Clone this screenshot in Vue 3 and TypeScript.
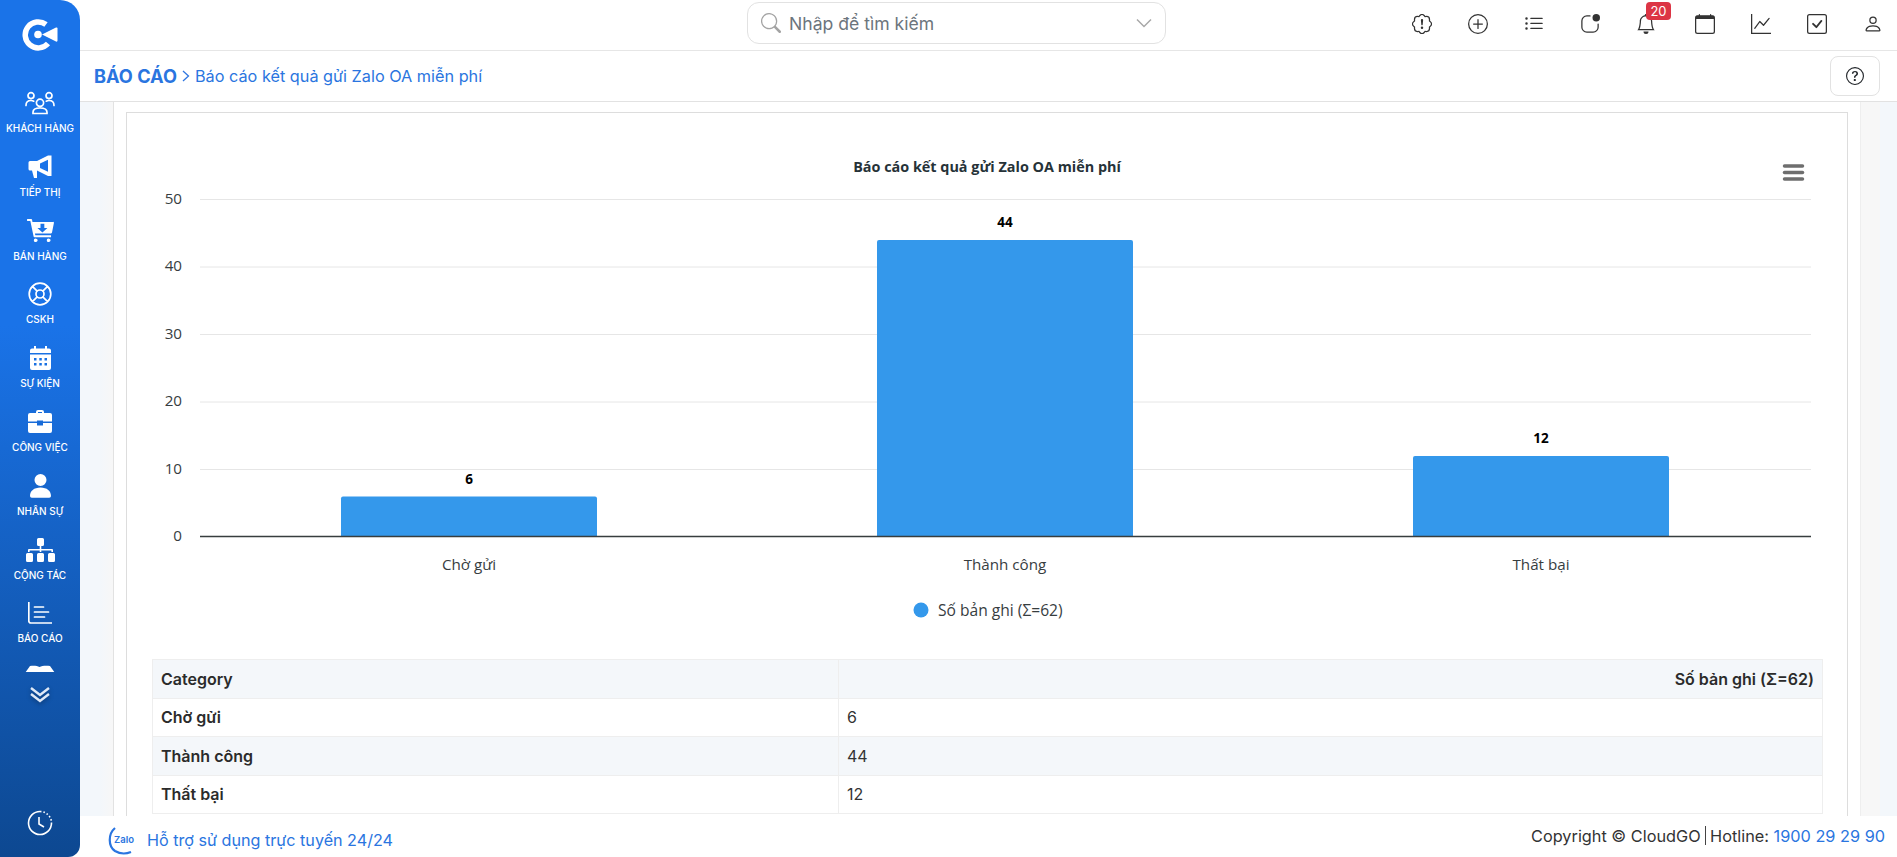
<script setup lang="ts">
interface NavItem {
  label: string;
  box: string;
  w: number;
  h: number;
  fill?: string;
  stroke?: string;
}

const navItems: NavItem[] = [
  {
    label: 'KHÁCH HÀNG',
    box: '0 0 30 24',
    w: 30,
    h: 24,
    stroke:
      'M15 8.2a3.6 3.6 0 1 0 0 7.2a3.6 3.6 0 0 0 0-7.2zM6 1.6a3 3 0 1 0 0 6a3 3 0 0 0 0-6zM24 1.6a3 3 0 1 0 0 6a3 3 0 0 0 0-6zM1 14.5c0-3.4 2-5 5-5c1.2 0 2 .2 2.7.7M29 14.5c0-3.4-2-5-5-5c-1.2 0-2 .2-2.7.7M8 22.5v-1.3c0-2.4 2.4-4.2 7-4.2s7 1.800 7 4.200v1.300z',
  },
  {
    label: 'TIẾP THỊ',
    box: '0 0 24 24',
    w: 24,
    h: 24,
    fill: 'M2 6H9L20 .5H23.500V21H20L9 15.500V23H6L4 15.500H2A1.500 1.500 0 0 1 .5 14V7.500A1.500 1.500 0 0 1 2 6zM12 8.500V13L20 16.800V4.700z',
  },
  {
    label: 'BÁN HÀNG',
    box: '0 0 28 24',
    w: 27,
    h: 23,
    fill: 'M0 0h4.200a1 1 0 0 1 1 .8L5.600 3H27a1 1 0 0 1 1 1.200l-2 10a1 1 0 0 1-1 .8H8.200l.4 2H25v2H7.800a1 1 0 0 1-1-.8L3.400 2H0zM14 5v4.500h-3.200L16 14l5.200-4.500H18V5zM9.500 20.500a2 1.800 0 1 0 0 3.500a2 1.800 0 0 0 0-3.500zM23 20.500a2 1.800 0 1 0 0 3.500a2 1.800 0 0 0 0-3.500z',
  },
  {
    label: 'CSKH',
    box: '0 0 24 24',
    w: 24,
    h: 24,
    stroke:
      'M12 1.200a10.800 10.800 0 1 0 0 21.600a10.800 10.800 0 0 0 0-21.600zM12 8a4 4 0 1 0 0 8a4 4 0 0 0 0-8zM4.400 4.400L9.200 9.200M19.600 4.400L14.800 9.200M4.400 19.600L9.200 14.800M19.600 19.600L14.800 14.800',
  },
  {
    label: 'SỰ KIỆN',
    box: '0 0 21 24',
    w: 21,
    h: 24,
    fill: 'M4 0h2v2.500h9V0h2v2.500h2a2 2 0 0 1 2 2V7H0V4.500a2 2 0 0 1 2-2h2zM0 8.500h21V22a2 2 0 0 1-2 2H2a2 2 0 0 1-2-2zM4 12v2.500h2.500V12zM9.300 12v2.500h2.500V12zM14.500 12v2.500H17V12zM4 17v2.500h2.500V17zM9.300 17v2.500h2.500V17zM14.500 17v2.500H17V17z',
  },
  {
    label: 'CÔNG VIỆC',
    box: '0 0 24 23',
    w: 24,
    h: 23,
    fill: 'M8 3V2a2 2 0 0 1 2-2h4a2 2 0 0 1 2 2v1h6a2 2 0 0 1 2 2v6.500H15v-1H9v1H0V5a2 2 0 0 1 2-2zm2-1v1h4V2zM0 13h9v2.500h6V13h9v8a2 2 0 0 1-2 2H2a2 2 0 0 1-2-2z',
  },
  {
    label: 'NHÂN SỰ',
    box: '0 0 21 24',
    w: 21,
    h: 24,
    fill: 'M10.500 0a6 6 0 1 1 0 12a6 6 0 0 1 0-12zM0 22c0-5 4-8.500 10.500-8.500S21 17 21 22a1.800 1.800 0 0 1-1.800 1.800H1.800A1.800 1.800 0 0 1 0 22z',
  },
  {
    label: 'CỘNG TÁC',
    box: '0 0 29 24',
    w: 29,
    h: 24,
    fill: 'M11 1.500A1.500 1.500 0 0 1 12.500 0h4A1.500 1.500 0 0 1 18 1.500v5A1.500 1.500 0 0 1 16.500 8h-1.200v3H26a1 1 0 0 1 1 1v2h-1.600v-1.400H15.300V14h-1.600v-1.400H3.600V14H2v-2a1 1 0 0 1 1-1h10.700V8h-1.200A1.500 1.500 0 0 1 11 6.500zM0 16.500A1.500 1.500 0 0 1 1.500 15h4A1.500 1.500 0 0 1 7 16.500v6A1.500 1.500 0 0 1 5.500 24h-4A1.500 1.500 0 0 1 0 22.500zM11 16.500A1.500 1.500 0 0 1 12.500 15h4A1.500 1.500 0 0 1 18 16.500v6a1.500 1.500 0 0 1-1.500 1.500h-4a1.500 1.500 0 0 1-1.500-1.500zM22 16.500A1.500 1.500 0 0 1 23.500 15h4A1.500 1.500 0 0 1 29 16.500v6a1.500 1.500 0 0 1-1.500 1.500h-4a1.500 1.500 0 0 1-1.500-1.500z',
  },
  {
    label: 'BÁO CÁO',
    box: '0 0 24 22',
    w: 24,
    h: 22,
    stroke: 'M.8 0v19a2 2 0 0 0 2 2H23.500M6.500 5h9M6.500 10h14M6.500 15h10',
  },
  {
    label: '',
    box: '0 0 30 24',
    w: 30,
    h: 24,
    fill: 'M5 1C8 .5 12 .5 14.500 2C17 .5 22 .5 25 1L30 8H0Z',
  },
];

interface TopIcon {
  name: string;
  paths: string[];
}

const circle = 'M8 15A7 7 0 1 1 8 1a7 7 0 0 1 0 14zm0 1A8 8 0 1 0 8 0a8 8 0 0 0 0 16z';

const topIcons: TopIcon[] = [
  {
    name: 'alert',
    paths: [
      'M7.001 11a1 1 0 1 1 2 0 1 1 0 0 1-2 0zM7.100 4.995a.905.905 0 1 1 1.800 0l-.35 3.507a.553.553 0 0 1-1.100 0L7.100 4.995z',
      'm10.273 2.513-.921-.944.715-.698.622.637.89-.011a2.890 2.890 0 0 1 2.924 2.924l-.01.89.636.622a2.890 2.890 0 0 1 0 4.134l-.637.622.011.89a2.890 2.890 0 0 1-2.924 2.924l-.89-.01-.622.636a2.890 2.890 0 0 1-4.134 0l-.622-.637-.89.011a2.890 2.890 0 0 1-2.924-2.924l.01-.89-.636-.622a2.890 2.890 0 0 1 0-4.134l.637-.622-.011-.89a2.890 2.890 0 0 1 2.924-2.924l.89.01.622-.636a2.890 2.890 0 0 1 4.134 0l-.715.698a1.890 1.890 0 0 0-2.704 0l-.92.944-1.320-.016a1.890 1.890 0 0 0-1.911 1.912l.016 1.318-.944.921a1.890 1.890 0 0 0 0 2.704l.944.92-.016 1.320a1.890 1.890 0 0 0 1.912 1.911l1.318-.016.921.944a1.890 1.890 0 0 0 2.704 0l.92-.944 1.320.016a1.890 1.890 0 0 0 1.911-1.912l-.016-1.318.944-.921a1.890 1.890 0 0 0 0-2.704l-.944-.92.016-1.320a1.890 1.890 0 0 0-1.912-1.911l-1.318.016z',
    ],
  },
  {
    name: 'plus',
    paths: [
      circle,
      'M8 4a.5.5 0 0 1 .5.5v3h3a.5.5 0 0 1 0 1h-3v3a.5.5 0 0 1-1 0v-3h-3a.5.5 0 0 1 0-1h3v-3A.5.5 0 0 1 8 4z',
    ],
  },
  {
    name: 'list',
    paths: [
      'M5 11.500a.5.5 0 0 1 .5-.5h9a.5.5 0 0 1 0 1h-9a.5.5 0 0 1-.5-.5zm0-4a.5.5 0 0 1 .5-.5h9a.5.5 0 0 1 0 1h-9a.5.5 0 0 1-.5-.5zm0-4a.5.5 0 0 1 .5-.5h9a.5.5 0 0 1 0 1h-9a.5.5 0 0 1-.5-.5zm-3 1a1 1 0 1 0 0-2 1 1 0 0 0 0 2zm0 4a1 1 0 1 0 0-2 1 1 0 0 0 0 2zm0 4a1 1 0 1 0 0-2 1 1 0 0 0 0 2z',
    ],
  },
  {
    name: 'app',
    paths: [
      'M5.500 2A3.500 3.500 0 0 0 2 5.500v5A3.500 3.500 0 0 0 5.500 14h5a3.500 3.500 0 0 0 3.500-3.500V8a.5.5 0 0 1 1 0v2.500a4.500 4.500 0 0 1-4.500 4.500h-5A4.500 4.500 0 0 1 1 10.500v-5A4.500 4.500 0 0 1 5.500 1H8a.5.5 0 0 1 0 1H5.500z',
      'M16 3a3 3 0 1 1-6 0 3 3 0 0 1 6 0z',
    ],
  },
  {
    name: 'bell',
    paths: [
      'M8 16a2 2 0 0 0 2-2H6a2 2 0 0 0 2 2zM8 1.918l-.797.161A4.002 4.002 0 0 0 4 6c0 .628-.134 2.197-.459 3.742-.16.767-.376 1.566-.663 2.258h10.244c-.287-.692-.502-1.490-.663-2.258C12.134 8.197 12 6.628 12 6a4.002 4.002 0 0 0-3.203-3.920L8 1.917zM14.220 12c.223.447.481.801.78 1H1c.299-.199.557-.553.78-1C2.680 10.200 3 6.880 3 6c0-2.420 1.720-4.440 4.005-4.901a1 1 0 1 1 1.990 0A5.002 5.002 0 0 1 13 6c0 .88.32 4.200 1.220 6z',
    ],
  },
  {
    name: 'calendar',
    paths: [
      'M3.500 0a.5.5 0 0 1 .5.5V1h8V.5a.5.5 0 0 1 1 0V1h1a2 2 0 0 1 2 2v11a2 2 0 0 1-2 2H2a2 2 0 0 1-2-2V3a2 2 0 0 1 2-2h1V.5a.5.5 0 0 1 .5-.5zM1 4v10a1 1 0 0 0 1 1h12a1 1 0 0 0 1-1V4z',
    ],
  },
  {
    name: 'graph',
    paths: [
      'M0 0h1v15h15v1H0V0Zm14.817 3.113a.5.5 0 0 1 .07.704l-4.500 5.500a.5.5 0 0 1-.74.037L7.060 6.767l-3.656 5.027a.5.5 0 0 1-.808-.588l4-5.500a.5.5 0 0 1 .758-.06l2.609 2.610 4.150-5.073a.5.5 0 0 1 .704-.07Z',
    ],
  },
  {
    name: 'check',
    paths: [
      'M14 1a1 1 0 0 1 1 1v12a1 1 0 0 1-1 1H2a1 1 0 0 1-1-1V2a1 1 0 0 1 1-1h12zM2 0a2 2 0 0 0-2 2v12a2 2 0 0 0 2 2h12a2 2 0 0 0 2-2V2a2 2 0 0 0-2-2H2z',
      'M10.970 4.970a.75.75 0 0 1 1.071 1.050l-3.992 4.990a.75.75 0 0 1-1.080.02L4.324 8.384a.75.75 0 1 1 1.060-1.060l2.094 2.093 3.473-4.425a.235.235 0 0 1 .02-.022z',
    ],
  },
  {
    name: 'person',
    paths: [
      'M8 8a3 3 0 1 0 0-6 3 3 0 0 0 0 6zm2-3a2 2 0 1 1-4 0 2 2 0 0 1 4 0zm4 8c0 1-1 1-1 1H3s-1 0-1-1 1-4 6-4 6 3 6 4zm-1-.004c-.001-.246-.154-.986-.832-1.664C11.516 10.680 10.289 10 8 10c-2.290 0-3.516.68-4.168 1.332-.678.678-.83 1.418-.832 1.664h10z',
    ],
  },
];

// chart geometry, in the svg's own pixels
const baseY = 424;
const perUnit = 6.75;
const plotLeft = 73;
const plotRight = 1684;
const ticks = [50, 40, 30, 20, 10, 0];
const bars = [
  { name: 'Chờ gửi', value: 6, center: 342 },
  { name: 'Thành công', value: 44, center: 878 },
  { name: 'Thất bại', value: 12, center: 1414 },
];
const barWidth = 256;

const rows = [
  { name: 'Chờ gửi', value: 6 },
  { name: 'Thành công', value: 44 },
  { name: 'Thất bại', value: 12 },
];

function barPath(center: number, value: number): string {
  const left = center - barWidth / 2;
  const top = baseY - value * perUnit;
  return `M${left} ${baseY}V${top + 2}q0-2 2-2H${left + barWidth - 2}q2 0 2 2V${baseY}Z`;
}
</script>

<template>
  <div class="page">
    <aside class="sidebar">
      <svg class="logo" width="36" height="33" viewBox="0 0 36 33">
        <path d="M24 6.500A13 13 0 1 0 26 25.500" fill="none" stroke="#fff" stroke-width="5.500" />
        <circle cx="16" cy="16.500" r="3.800" fill="#fff" />
        <path d="M20 16.500L34 9.500Q35.500 9 35.500 10.500V22.500Q35.500 24 34 23.500Z" fill="#fff" />
      </svg>
      <nav class="nav-list">
        <div v-for="(item, i) in navItems" :key="i" class="nav-item">
          <div class="nav-icon">
            <svg :width="item.w" :height="item.h" :viewBox="item.box">
              <path v-if="item.fill" :d="item.fill" fill="#fff" fill-rule="evenodd" />
              <path v-if="item.stroke" :d="item.stroke" fill="none" stroke="#fff" stroke-width="1.700" stroke-linecap="round" />
            </svg>
          </div>
          <div v-if="item.label" class="nav-label">{{ item.label }}</div>
        </div>
      </nav>
      <svg class="more" width="22" height="17" viewBox="0 0 22 17">
        <path d="M2 2l9 7 9-7M2 8l9 7 9-7" fill="none" stroke="#dfe9f7" stroke-width="2.400" />
      </svg>
      <svg class="clock" width="26" height="26" viewBox="0 0 26 26">
        <path d="M13 1.500A11.500 11.500 0 1 0 24.500 13" fill="none" stroke="#fff" stroke-width="1.600" />
        <path d="M13 1.500A11.500 11.500 0 0 1 24.500 13" fill="none" stroke="#fff" stroke-width="1.600" stroke-dasharray="1.500 2" />
        <path d="M12 7v7l5 3" fill="none" stroke="#fff" stroke-width="1.600" />
      </svg>
    </aside>

    <div class="main">
      <header class="topbar">
        <div class="search">
          <svg width="20" height="20" viewBox="0 0 16 16" fill="#a3a3a3">
            <path d="M11.742 10.344a6.500 6.500 0 1 0-1.397 1.398h-.001c.03.04.062.078.098.115l3.850 3.850a1 1 0 0 0 1.415-1.414l-3.850-3.850a1 1 0 0 0-.115-.1zM12 6.500a5.500 5.500 0 1 1-11 0 5.500 5.500 0 0 1 11 0z" />
          </svg>
          <span class="search-text">Nhập để tìm kiếm</span>
          <svg class="search-arrow" width="16" height="10" viewBox="0 0 16 10">
            <path d="M1 1.500l7 7 7-7" fill="none" stroke="#a8a8a8" stroke-width="1.500" />
          </svg>
        </div>
        <div class="top-icons">
          <div v-for="icon in topIcons" :key="icon.name" class="top-icon" :class="icon.name">
            <svg width="20" height="20" viewBox="0 0 16 16" fill="#333">
              <path v-for="(d, i) in icon.paths" :key="i" :d="d" />
              <rect v-if="icon.name === 'calendar'" x="1" y="1.500" width="14" height="2.500" />
            </svg>
            <span v-if="icon.name === 'bell'" class="badge">20</span>
          </div>
        </div>
      </header>

      <div class="crumbbar">
        <span class="crumb-root">BÁO CÁO</span>
        <svg class="crumb-sep" width="8" height="12" viewBox="0 0 8 12">
          <path d="M1 1l5.500 5L1 11" fill="none" stroke="#2f76e0" stroke-width="1.300" />
        </svg>
        <span class="crumb-page">Báo cáo kết quả gửi Zalo OA miễn phí</span>
        <button class="help" type="button">
          <svg width="18" height="18" viewBox="0 0 16 16" fill="#212529">
            <path d="M8 15A7 7 0 1 1 8 1a7 7 0 0 1 0 14zm0 1A8 8 0 1 0 8 0a8 8 0 0 0 0 16z" />
            <path d="M5.255 5.786a.237.237 0 0 0 .241.247h.825c.138 0 .248-.113.266-.25.09-.656.54-1.134 1.342-1.134.686 0 1.314.343 1.314 1.168 0 .635-.374.927-.965 1.371-.673.489-1.206 1.060-1.168 1.987l.003.217a.25.25 0 0 0 .25.246h.811a.25.25 0 0 0 .25-.25v-.105c0-.718.273-.927 1.010-1.486.609-.463 1.244-.977 1.244-2.056 0-1.511-1.276-2.241-2.673-2.241-1.267 0-2.655.59-2.750 2.286zm1.557 5.763c0 .533.425.927 1.010.927.609 0 1.028-.394 1.028-.927 0-.552-.42-.94-1.029-.94-.584 0-1.009.388-1.009.94z" />
          </svg>
        </button>
      </div>

      <div class="content">
        <div class="shade">
          <div class="panel">
            <div class="card">
              <svg class="chart" width="1721" height="546" viewBox="0 0 1721 546">
                <text x="860" y="59" class="chart-title" text-anchor="middle">Báo cáo kết quả gửi Zalo OA miễn phí</text>
                <g stroke="#6e6e6e" stroke-width="3.500" stroke-linecap="round">
                  <line x1="1657.500" y1="53" x2="1675.500" y2="53" />
                  <line x1="1657.500" y1="59.500" x2="1675.500" y2="59.500" />
                  <line x1="1657.500" y1="66" x2="1675.500" y2="66" />
                </g>
                <g v-for="t in ticks" :key="t">
                  <line v-if="t > 0" :x1="plotLeft" :x2="plotRight" :y1="baseY - t * perUnit" :y2="baseY - t * perUnit" stroke="#e6e6e6" />
                  <text x="55" :y="baseY - t * perUnit + 4" class="axis" text-anchor="end">{{ t }}</text>
                </g>
                <g v-for="bar in bars" :key="bar.name">
                  <path :d="barPath(bar.center, bar.value)" fill="#3498eb" />
                  <text :x="bar.center" :y="baseY - bar.value * perUnit - 13" class="data-label" text-anchor="middle">{{ bar.value }}</text>
                  <text :x="bar.center" y="457" class="axis" text-anchor="middle">{{ bar.name }}</text>
                </g>
                <line :x1="plotLeft" :x2="plotRight" y1="423.500" y2="423.500" stroke="#373d3f" stroke-width="1.500" />
                <circle cx="794" cy="497" r="7.500" fill="#3498eb" />
                <text x="811" y="503" class="axis legend">Số bản ghi (Σ=62)</text>
              </svg>
              <table class="data-table">
                <thead>
                  <tr>
                    <th class="col-name">Category</th>
                    <th class="col-value">Số bản ghi (Σ=62)</th>
                  </tr>
                </thead>
                <tbody>
                  <tr v-for="row in rows" :key="row.name">
                    <th>{{ row.name }}</th>
                    <td>{{ row.value }}</td>
                  </tr>
                </tbody>
              </table>
            </div>
          </div>
        </div>
      </div>

      <footer class="footer">
        <div class="support">
          <svg class="zalo-logo" width="28" height="30" viewBox="0 0 28 30">
            <path d="M7 1C0 7 0 19 7 24c5 3 11 3 16 1" fill="none" stroke="#2a75e0" stroke-width="2.200" />
            <text x="6" y="16" class="zalo">Zalo</text>
          </svg>
          <span>Hỗ trợ sử dụng trực tuyến 24/24</span>
        </div>
        <div class="copyright">
          <span>Copyright © CloudGO</span>
          <i class="divider"></i>
          <span>Hotline: <a class="hotline">1900 29 29 90</a></span>
        </div>
      </footer>
    </div>
  </div>
</template>

<style>
html,
body {
  margin: 0;
  overflow: hidden;
  background: #fff;
}
</style>

<style scoped>
.page {
  display: flex;
  width: 1897px;
  height: 857px;
  overflow: hidden;
  font-family: Inter, "Liberation Sans", sans-serif;
  color: #333;
  background: #fff;
}

.sidebar {
  flex: 0 0 80px;
  display: flex;
  flex-direction: column;
  align-items: center;
  background: linear-gradient(180deg, #1a73e8 38%, #0d4891 100%);
  border-radius: 0 20px 12px 0;
}

.logo {
  margin-top: 18px;
}

.nav-list {
  width: 100%;
  height: 582px;
  margin-top: 39px;
  overflow: hidden;
  flex-shrink: 0;
}

.nav-item {
  height: 63.8px;
  display: flex;
  flex-direction: column;
  align-items: center;
}

.nav-icon {
  height: 26px;
  display: flex;
  align-items: center;
  justify-content: center;
}

.nav-label {
  margin-top: 6px;
  font-size: 10px;
  font-weight: 500;
  line-height: 12px;
  color: #fff;
  white-space: nowrap;
}

.more {
  margin-top: 14px;
  filter: drop-shadow(0 2px 2px rgba(0, 0, 0, 0.3));
}

.clock {
  margin-top: auto;
  margin-bottom: 21px;
}

.main {
  flex: 1;
  min-width: 0;
  display: flex;
  flex-direction: column;
}

.topbar {
  flex: 0 0 51px;
  box-sizing: border-box;
  display: flex;
  align-items: flex-start;
  border-bottom: 1px solid #e6e6e6;
}

.search {
  box-sizing: border-box;
  width: 419px;
  height: 42px;
  margin: 2px 0 0 667px;
  padding: 0 13px;
  display: flex;
  align-items: center;
  border: 1px solid #e2e2e2;
  border-radius: 12px;
}

.search-text {
  margin-left: 8px;
  font-size: 17.6px;
  color: #6c757d;
}

.search-arrow {
  margin-left: auto;
}

.top-icons {
  margin-left: auto;
  padding-right: 14px;
  display: flex;
  gap: 36px;
}

.top-icon {
  position: relative;
  width: 20px;
  height: 20px;
  margin-top: 14px;
}

.top-icon.bell {
  margin-right: 3px;
}

.badge {
  position: absolute;
  top: -12px;
  left: 10px;
  width: 25px;
  height: 18px;
  border-radius: 4px;
  background: #dc3545;
  color: #fff;
  font-size: 13px;
  line-height: 18px;
  text-align: center;
}

.crumbbar {
  flex: 0 0 51px;
  box-sizing: border-box;
  padding: 0 17px 0 14px;
  display: flex;
  align-items: center;
  border-bottom: 1px solid #e2e2e2;
  color: #2a75e0;
}

.crumb-root {
  font-size: 18.2px;
  font-weight: 700;
}

.crumb-sep {
  margin: 0 5px;
}

.crumb-page {
  font-size: 16.25px;
}

.help {
  margin-left: auto;
  width: 50px;
  height: 40px;
  padding: 0;
  display: flex;
  align-items: center;
  justify-content: center;
  background: #fff;
  border: 1px solid #e2e2e2;
  border-radius: 8px;
}

.content {
  flex: 1;
  min-height: 0;
  overflow: hidden;
  padding: 0 0 0 20px;
  background: #f3f7fb;
}

.shade {
  height: 100%;
  width: 1780px;
  box-sizing: border-box;
  padding: 0 19px 0 13px;
  background: linear-gradient(90deg, #f3f7fb, #f7f7f7 12px, #f7f7f7);
}

.panel {
  height: 100%;
  box-sizing: border-box;
  padding: 10px 12px 0;
  background: #fff;
  border-left: 1px solid #e2e2e2;
  border-right: 1px solid #eee;
}

.card {
  height: 100%;
  box-sizing: border-box;
  border: solid #ddd;
  border-width: 1px 1px 0;
}

.chart {
  display: block;
}

.chart text {
  font-family: "Open Sans", "Noto Sans", sans-serif;
}

.chart .chart-title {
  font-size: 14.4px;
  font-weight: 700;
  fill: #263238;
}

.chart .axis {
  font-size: 15.2px;
  fill: #373d3f;
}

.chart .legend {
  font-size: 15.6px;
}

.chart .data-label {
  font-size: 13.5px;
  font-weight: 700;
  fill: #000;
}

.data-table {
  width: 1671px;
  margin-left: 25px;
  border-collapse: collapse;
  table-layout: fixed;
  font-size: 16px;
}

.data-table th,
.data-table td {
  height: 38.5px;
  box-sizing: border-box;
  padding: 0 8px;
  border: 1px solid #eee;
  text-align: left;
  font-weight: 600;
  color: #2b2b2b;
}

.data-table td {
  font-weight: 400;
  color: #333;
}

.data-table thead tr,
.data-table tbody tr:nth-child(even) {
  background: #f4f7fa;
}

.data-table .col-name {
  width: 686px;
}

.data-table .col-value {
  text-align: right;
}

.footer {
  flex: 0 0 41px;
  display: flex;
  justify-content: space-between;
  background: #fff;
  font-size: 16.15px;
}

.support {
  margin-left: 28px;
  display: flex;
  align-items: center;
  gap: 11px;
  color: #2a75e0;
}

.support span {
  position: relative;
  top: 3px;
}

.zalo-logo {
  margin-top: 10px;
}

.zalo {
  font-family: Inter, sans-serif;
  font-size: 9.5px;
  font-weight: 600;
  fill: #2a75e0;
}

.copyright {
  height: 21px;
  margin: 9px 12px 0 0;
  display: flex;
  align-items: center;
  font-size: 16.3px;
}

.divider {
  width: 1.5px;
  height: 19px;
  margin: 0 4px;
  background: #444;
}

.hotline {
  color: #2a75e0;
}
</style>
